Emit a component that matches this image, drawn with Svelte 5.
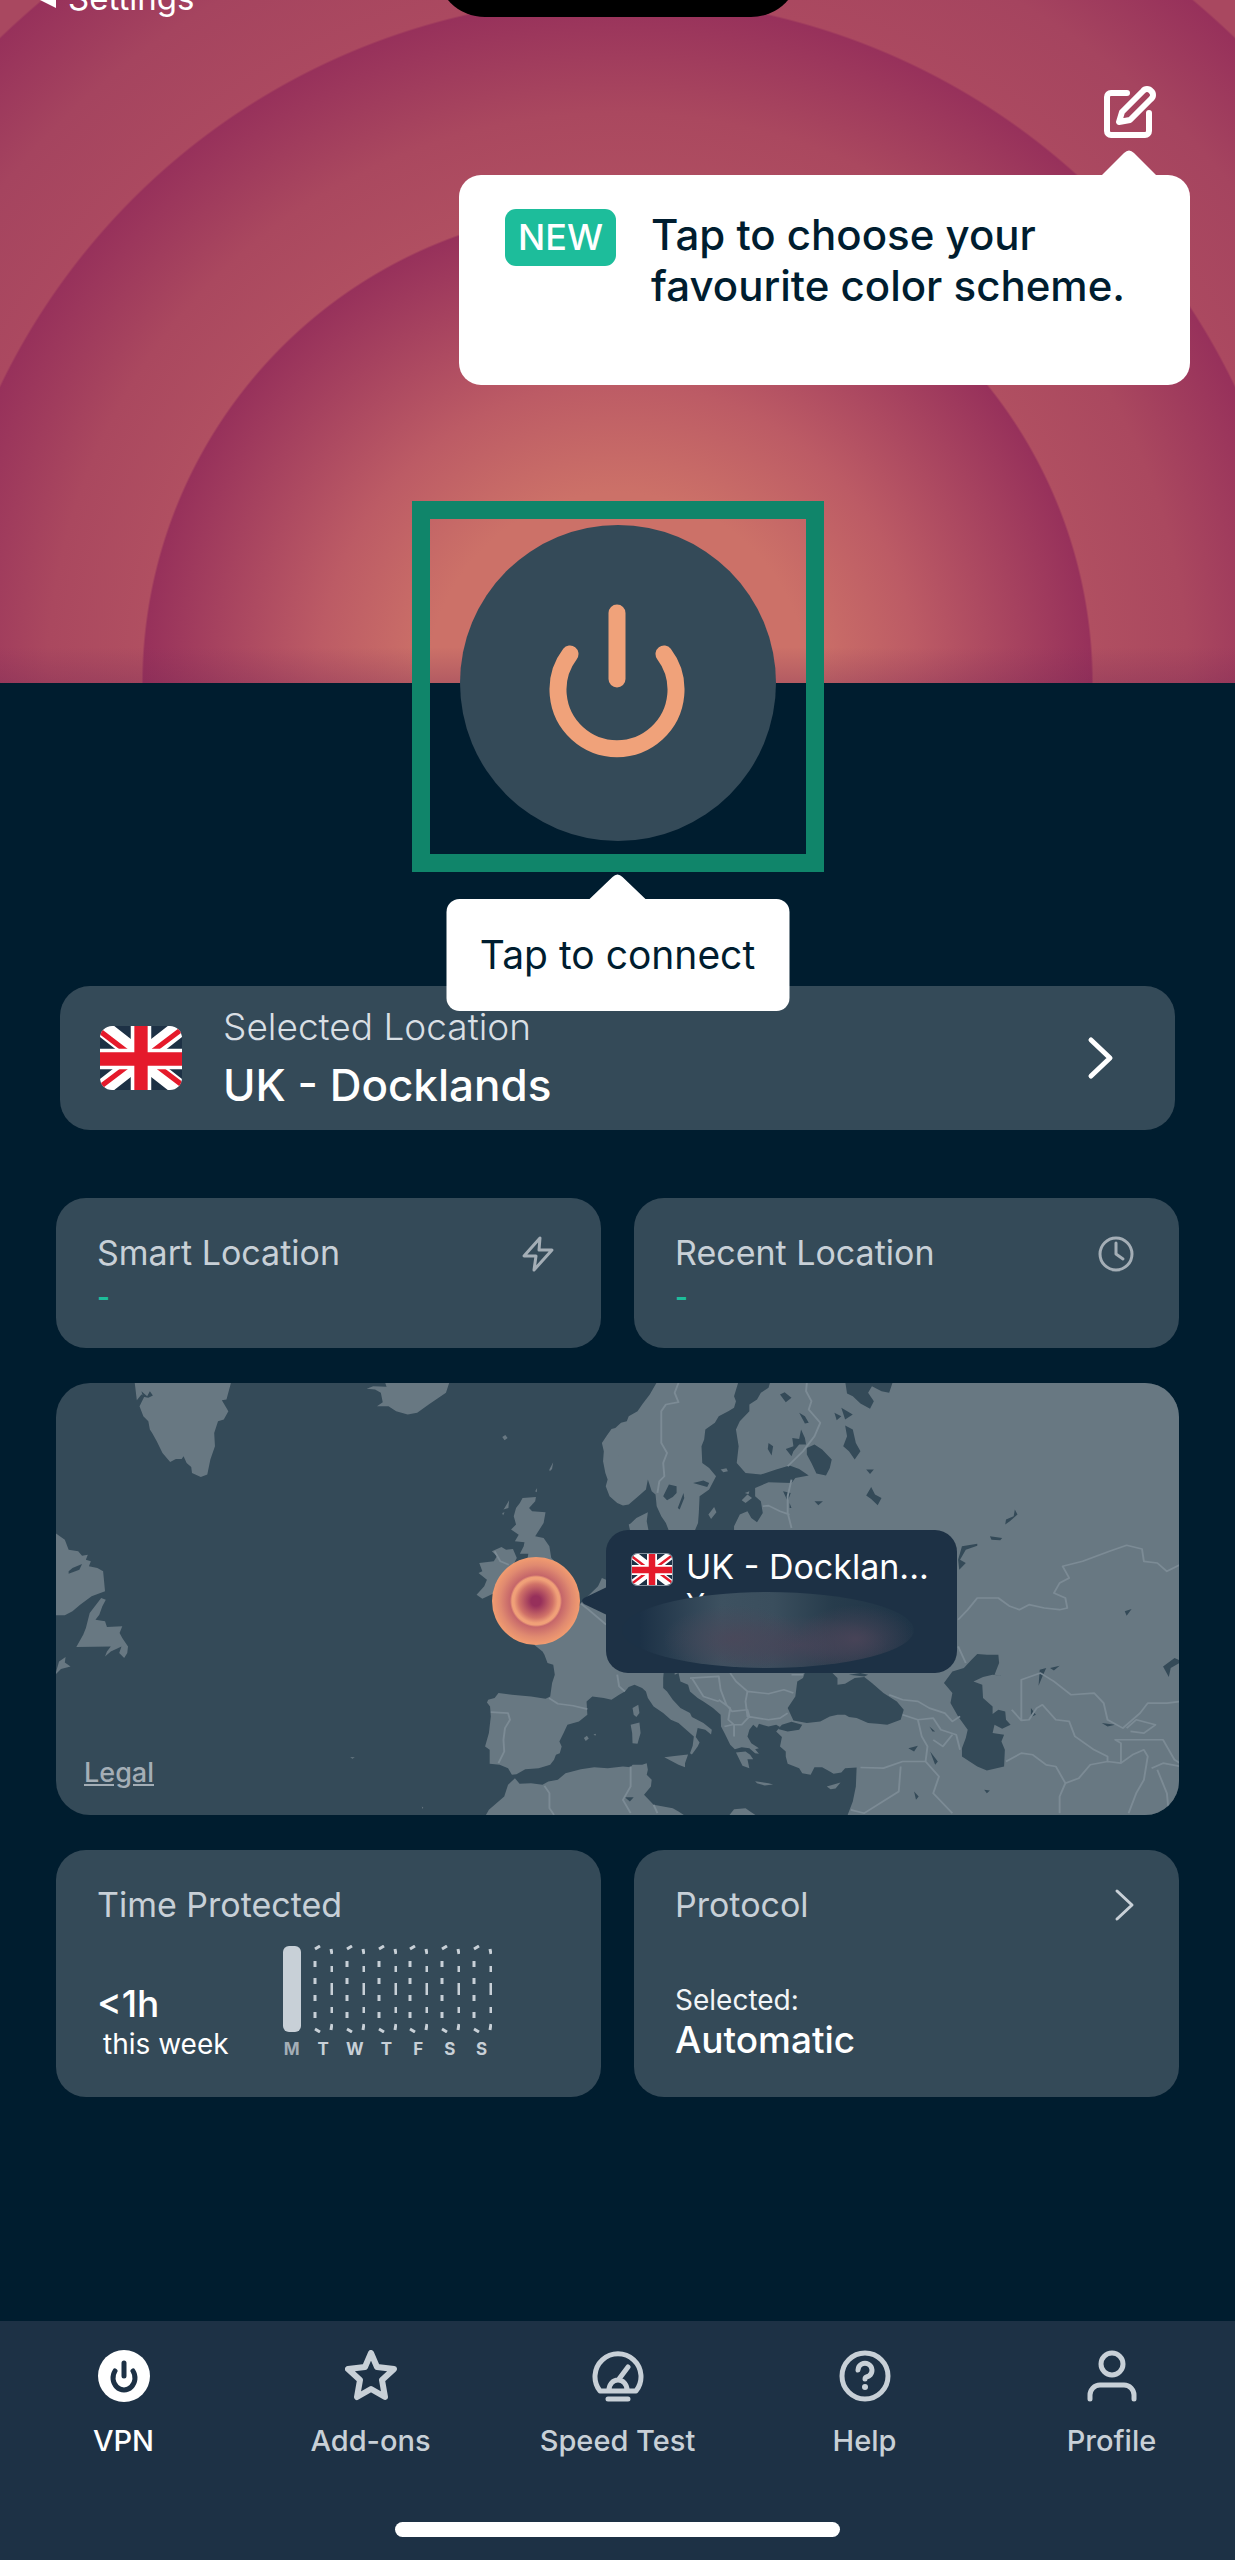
<script>
  const days = ["M", "T", "W", "T", "F", "S", "S"];
  const today = 0;

  const quickLocations = [
    { title: "Smart Location", value: "-", icon: "bolt" },
    { title: "Recent Location", value: "-", icon: "clock" },
  ];

  const tabs = [
    { id: "vpn", label: "VPN" },
    { id: "addons", label: "Add-ons" },
    { id: "speed", label: "Speed Test" },
    { id: "help", label: "Help" },
    { id: "profile", label: "Profile" },
  ];

  let activeTab = $state("vpn");
</script>

{#snippet flag()}
  <svg class="flag" viewBox="0 0 80 62" preserveAspectRatio="none" aria-hidden="true">
    <rect width="80" height="62" fill="#1d3145" />
    <path d="M0 0 80 62M80 0 0 62" stroke="#fff" stroke-width="17" />
    <path d="M0 5 29 27M80 3 52 24M0 59 28 38M80 57 52 36" stroke="#e51a2b" stroke-width="5" />
    <path d="M40 0V62M0 32H80" stroke="#fff" stroke-width="20" />
    <path d="M40 0V62M0 32H80" stroke="#e51a2b" stroke-width="13" />
  </svg>
{/snippet}

<div class="app">
  <header class="hero">
    <div class="island"></div>
    <a class="back" href="#settings">
      <svg width="20" height="22" viewBox="0 0 20 22" aria-hidden="true"><path d="M0 11 20 1V21Z" fill="#fff" /></svg>
      Settings
    </a>
    <button class="edit" aria-label="Edit color scheme">
      <svg width="56" height="56" viewBox="0 0 56 56" fill="none" stroke="#fff" stroke-width="6" stroke-linecap="round" stroke-linejoin="round">
        <path d="M25 10H9a4 4 0 0 0-4 4V48a4 4 0 0 0 4 4H43a4 4 0 0 0 4-4V30" />
        <path d="M17 39 20 29 41 8a5 5 0 0 1 8 0a5 5 0 0 1 0 8L28 37Z" />
      </svg>
    </button>
    <div class="scheme-tip">
      <svg class="arrow" width="58" height="28" viewBox="0 0 58 28" aria-hidden="true"><path d="M0 28 24 4Q29-1 34 4L58 28Z" fill="#fff" /></svg>
      <span class="badge">NEW</span>
      <p>Tap to choose your<br />favourite color scheme.</p>
    </div>
  </header>

  <main>
    <div class="power-frame">
      <button class="power" aria-label="Connect">
        <svg width="140" height="160" viewBox="0 0 140 160" fill="none" stroke="#f0a27a" stroke-width="17" stroke-linecap="round">
          <path d="M69 10V76" />
          <path d="M22 51A59 59 0 1 0 116 51" />
        </svg>
      </button>
      <div class="connect-tip">
        <svg class="arrow" width="58" height="27" viewBox="0 0 58 27" aria-hidden="true"><path d="M0 27 24 4Q29-1 34 4L58 27Z" fill="#fff" /></svg>
        Tap to connect
      </div>
    </div>

    <button class="card selected">
      {@render flag()}
      <span class="selected-text">
        <span class="caption">Selected Location</span>
        <strong>UK - Docklands</strong>
      </span>
      <svg width="34" height="48" viewBox="0 0 34 48" fill="none" stroke="#fff" stroke-width="5" stroke-linecap="round" stroke-linejoin="round" aria-hidden="true"><path d="M8 6 27 24 8 42" /></svg>
    </button>

    <section class="grid">
      {#each quickLocations as loc}
        <button class="card quick">
          <span class="card-head">
            {loc.title}
            <svg width="38" height="38" viewBox="0 0 38 38" fill="none" stroke="#a4aeb6" stroke-width="3" stroke-linecap="round" stroke-linejoin="round" aria-hidden="true">
              {#if loc.icon === "bolt"}
                <path d="M21 4 5 22H17L15 36 33 16H20Z" />
              {:else}
                <circle cx="19" cy="20" r="16" />
                <path d="M19 9V20L26 25" />
              {/if}
            </svg>
          </span>
          <span class="value">{loc.value}</span>
        </button>
      {/each}

      <div class="map">
        <svg class="world" viewBox="0 0 1122 432" preserveAspectRatio="xMidYMid slice" aria-hidden="true">
          <!-- Atlantic side -->
          <g transform="translate(-6.5 -3.3) scale(.3827 .3333)" fill="#687882">
            <path d="M222 5H475L462 60 450 62 467 95 455 120 440 125 430 160 432 200 420 240 412 285 395 292 372 280 370 262 358 250 350 230 345 238 330 238 315 247 295 220 280 185 268 160 262 150 258 125 245 110 235 80 248 50 240 45 228 62Z" />
            <path d="M240 35 255 50 262 35 270 48 258 55 244 52Z" fill="#344a58" />
            <path d="M875 5H1045L1035 40 1012 58 990 75 960 100 935 105 905 95 885 80 855 80 870 68 865 40 850 30 828 28 845 20 880 22Z" />
            <path d="M15 460 40 480 50 510 75 515 85 528 100 525 95 540 108 545 103 560 125 565 140 575 145 635 110 650 80 675 60 695 40 707 15 707Z" />
            <path d="M50 575 60 565 85 553 78 570 50 582Z" fill="#344a58" />
            <path d="M135 655 147 660 138 680 130 705 120 720 145 725 150 742 190 740 183 760 190 775 205 800 203 820 195 835 182 820 188 800 160 815 145 830 150 815 160 800 70 802 88 765 95 745 105 700Z" />
            <path d="M15 885 25 845 42 832 40 848 55 860 30 868Z" />
            <path d="M1182 172 1190 166 1196 175 1188 182ZM1305 270 1315 248 1312 268 1306 275ZM1268 335 1273 325 1272 338ZM1188 385 1200 362 1198 385 1185 390ZM1182 400 1188 398 1184 408Z" />
            <path d="M1235 355 1270 352 1268 365 1252 385 1260 395 1295 398 1290 430 1268 470 1290 475 1305 500 1310 535 1340 570V640H1240V600L1250 522 1228 522 1238 500 1240 488 1215 485 1225 465 1205 450 1218 435 1212 410 1218 385 1228 370Z" />
            <path d="M1155 515 1180 502 1192 510 1210 508 1220 535 1200 580 1180 630 1130 657 1115 645 1135 620 1142 600 1120 580 1130 575 1122 550 1160 545 1168 530Z" />
            <path d="M1395 1075 1403 1068 1408 1076 1400 1084ZM1420 1064 1427 1062 1425 1068ZM785 1132 797 1132 791 1137ZM972 1280 976 1284 973 1287Z" />
          </g>

          <!-- Europe and Asia -->
          <g transform="translate(543.5 -3.3) scale(.3827 .3333)" fill="#687882">
            <path d="M150 5 130 45 112 72 98 95 75 110 70 125 55 130 40 145 30 148 18 168 5 190 10 215 8 245 14 280 20 300 15 320 25 350 45 370 60 378 75 375 100 350 120 330 125 300 135 335 145 345 148 380 160 410 172 430 182 460V600H16L5 595-5 620-50 670-90 760-172 795-150 815-145 825-137 850-122 855-118 885-125 910-130 950-142 957-180 950-230 945-265 940-275 955-292 960-295 968-287 980-285 1010-290 1060-300 1100-288 1110-288 1152-262 1155-240 1165-230 1185-218 1183-195 1168-160 1165-130 1155-120 1140-115 1125-105 1120-100 1100-106 1085-95 1060-85 1035-55 1025-33 1005-35 965-20 950 10 955 30 960 50 945 65 935 75 922 90 915 110 925 120 935 125 955 140 980 165 1000 185 1020 205 1030 225 1050 245 1070 242 1098 235 1120 240 1124 255 1100 260 1088 250 1072 255 1045 275 1050 290 1064 292 1050 270 1030 240 1012 235 1000 210 985 190 960 175 935 165 925 165 895 168 860H195V885L205 880 210 905 230 915 235 935 255 955 270 965 295 985 315 1005 316 1040 325 1060 340 1095 352 1108 370 1102 390 1105 405 1120 415 1122 405 1108 415 1105 395 1090 385 1070 390 1050 400 1035 410 1045 415 1032 440 1040 460 1035 470 1042 460 1055 475 1072 470 1100 485 1115 485 1130 490 1152 520 1165 528 1180 550 1185 560 1162 580 1162 600 1175 610 1182 630 1178 640 1165 670 1163 668 1220 660 1265 645 1310H1525V5Z" />
            <path d="M-300 1310-290 1290-250 1250-240 1215-222 1195-210 1212-180 1210-150 1215-135 1205-110 1200-90 1180-50 1168-15 1162 20 1165 60 1160 80 1162 85 1155 110 1155 122 1150 125 1170 122 1185 135 1200 133 1220 115 1245 140 1275 190 1285 205 1295 225 1310Z" />
            <path d="M335 1310 350 1288 380 1285 392 1295 412 1310ZM80 432 95 415 125 398 122 425 128 460H80L75 435ZM85 985 100 975 103 1000 95 1012 88 1005ZM80 1035 103 1028 106 1060 98 1092 85 1090 84 1060ZM168 1132 200 1128 230 1124 222 1150 222 1162 205 1155ZM405 1204 440 1210 452 1214 430 1217 410 1210ZM592 1220 628 1208 615 1226 602 1228ZM355 1118 380 1115 392 1125 400 1138 385 1138 390 1165 372 1158Z" />

            <g fill="#344a58">
              <path d="M362 5H445L440 25 420 40 410 60 390 75 390 95 365 125 355 150 362 200 357 250 380 280 420 285 460 270 495 258 520 268 545 288 510 295 500 310 440 308 405 325 405 350 420 365 425 400 410 428 395 415 385 395 365 405 350 440V460H245L256 430 258 400 260 350 285 330 303 290 285 265 267 250 265 200 272 180 275 150 300 130 310 110 335 95 350 85 355 65 350 50Z" />
              <path d="M640 5H765L755 40 735 35 710 20 700 40 715 65 705 88 680 72 660 50 645 42ZM540 205 560 195 580 210 605 240 600 265 590 288 565 282 552 250 540 225ZM640 138 660 150 668 190 680 215 665 240 650 215 635 200 645 170ZM470 45 482 38 500 55 485 68ZM520 100 535 110 545 130 535 132ZM630 85 660 105 640 120ZM612 100 630 110 618 122ZM525 150 535 175 538 195 520 195 505 215 500 230 485 208 505 200 502 175 520 178ZM440 190 452 200 448 228 438 208ZM695 270 715 270 705 283ZM708 322 718 345 735 355 725 377 708 358 695 348ZM560 365 582 365 570 377ZM165 350 180 315 200 320 200 340 190 352 175 362ZM203 385 218 340 220 355 208 390ZM243 310 270 303 285 310 280 322ZM478 335 498 340 490 365ZM495 370 500 385 495 385Z" />
              <path d="M540 860H590L620 895 620 915 640 912 665 895 690 892 710 910 740 940 775 965 793 990 785 1020 750 1035 725 1032 700 1030 670 1015 650 1012 640 1005 620 1005 600 1010 575 1025 540 1030 505 1022 490 985 510 950 515 905 530 895ZM650 885 680 880 700 885 690 890ZM475 1035 500 1026 528 1035 520 1050 490 1055 465 1048Z" />
              <path d="M898 910 920 875 950 865 970 840 985 823 1010 825 1040 825 1042 850 1030 885 1050 888 1025 885 1000 892 975 905 998 915 1000 955 1025 980 1025 1003 1040 990 1058 995 1060 1020 1072 1035 1050 1047 1030 1035 1025 1060 1055 1065 1048 1085 1057 1110 1055 1160 1010 1172 985 1160 945 1130 945 1105 955 1075 960 1050 935 1010 915 970 920 940Z" />
              <path d="M938 570 935 540 945 500 985 492 985 498 955 510 940 540 955 550ZM1018 470 1050 475 1045 482 1022 480ZM1058 435 1060 420 1080 410 1083 390 1090 405 1070 425ZM1145 918 1148 870 1165 865 1155 890ZM1175 865 1200 858 1185 872ZM1370 695 1388 688 1375 708ZM1470 860 1500 835 1520 845 1490 865 1485 892ZM1310 1030 1345 1035 1325 1040ZM1125 985 1138 1005 1125 1012ZM805 1105 830 1098 820 1115ZM862 1115 882 1145 875 1155ZM860 1040 875 1055 868 1055ZM820 1235 832 1250 825 1260ZM1003 1230 1018 1232 1010 1240ZM65 1252 88 1252 78 1265Z" />
            </g>
            <path d="M283 405 298 382 304 398 290 418ZM370 362 385 345 397 355 380 370ZM378 340 390 335 388 344ZM315 270 330 266 334 275 322 278ZM25 228 48 228 48 232 25 232Z" />
            <path
              class="borders"
              d="M205 10 195 40 205 68 172 75 160 95 160 190 175 220 165 250 168 290 155 305 150 340M540 10 538 35 552 65 545 90 575 130 560 170 530 215 490 260M500 300 490 350 490 400 500 445M425 380 440 378 470 395 495 405M935 720 960 690 985 655 1015 655 1040 655 1070 680 1095 690 1120 675 1160 685 1200 690 1220 685 1215 655 1185 640 1200 610 1225 595 1208 560 1260 545 1330 515 1375 497 1415 508 1420 545 1455 550 1480 575 1515 555M1100 1020V900L1150 880 1185 905 1230 945 1290 940 1315 970 1325 1020 1365 1045 1410 1000 1430 970 1480 970 1515 965M1075 990 1100 1022 1120 1020 1140 985 1155 975 1190 1020 1225 1025 1240 1070 1290 1110 1325 1130 1325 1145 1280 1155 1250 1195 1215 1210 1190 1160 1165 1155 1130 1125 1100 1120 1060 1145M1215 1210 1200 1250V1300M1325 1145 1360 1150 1360 1090 1345 1080 1440 1080 1470 1080 1500 1140 1515 1150M1375 1045 1400 1020 1450 1035 1420 1060 1385 1055M1380 1300 1400 1240 1420 1200 1430 1130 1420 1110 1390 1125 1360 1150M755 945 790 960 830 965 860 985 900 1000 920 1025 940 1010M790 1005 830 1020 870 1015 890 1050 930 1065 940 1110M830 1020 840 1070 855 1100 850 1145 790 1145 740 1165 680 1163M850 1145 885 1190 870 1240 920 1300M785 1160 780 1235 690 1300 655 1290M870 1080 895 1100 920 1065M385 935 440 942 480 930 505 940M340 880 355 905 385 935 380 965 385 1010 440 1020 470 1015 490 1000M235 895 310 890 315 930 330 975 345 995 385 990 390 1010 370 1035 345 1035 325 1040M310 960 340 985 335 1020 350 1035 350 1070M240 895 270 950 310 965M500 885 530 885M935 800 955 850M1440 1165 1470 1150 1515 1160M1455 1170 1480 1240 1485 1300M45 885 50 920 65 935M80 1160V1220L60 1260 80 1300M140 1275 150 1300M-133 955-110 972-70 978-33 988M-285 997-240 1000-235 1020-248 1045-252 1080-250 1115-265 1150M-145 1218-132 1240-132 1285-120 1305M-50 672-30 690 16 735M-275 515-260 545-238 555"
            />
          </g>
        </svg>

        <div class="pin"></div>

        <div class="map-tip">
          <svg class="pointer" width="25" height="28" viewBox="0 0 25 28" aria-hidden="true"><path d="M25 0V28L2 17Q-2 14 2 11Z" fill="#1d3145" /></svg>
          {@render flag()}
          <div class="map-tip-text">
            <span>UK - Docklan...</span>
            <small>Y</small>
          </div>
          <div class="smudge"></div>
        </div>

        <a class="legal" href="#legal">Legal</a>
      </div>

      <div class="card stat">
        <span class="card-head">Time Protected</span>
        <div class="usage">
          <div class="total">
            <strong>&lt;1h</strong>
            <span>this week</span>
          </div>
          <div class="week">
            {#each days as day, i}
              <div class="day" class:today={i === today}>
                <svg width="20" height="88" viewBox="0 0 20 88" aria-hidden="true">
                  {#if i === today}
                    <rect x="1" y="1" width="18" height="86" rx="6" fill="#c8d0d7" />
                  {:else}
                    <path
                      d="M2 4 7 1M2 16V22M2 33V39M2 50V56M2 67V73M2 84 7 87M18 4 19 9M19 21V27M19 38V50M19 62V68M19 79 18 85"
                      stroke="#c8d0d7"
                      stroke-width="3"
                    />
                  {/if}
                </svg>
                <span>{day}</span>
              </div>
            {/each}
          </div>
        </div>
      </div>

      <button class="card stat">
        <span class="card-head">
          Protocol
          <svg width="28" height="38" viewBox="0 0 28 38" fill="none" stroke="#c8d0d7" stroke-width="3" stroke-linecap="round" stroke-linejoin="round" aria-hidden="true"><path d="M10 5 25 19 10 33" /></svg>
        </span>
        <span class="protocol">
          <span>Selected:</span>
          <strong>Automatic</strong>
        </span>
      </button>
    </section>
  </main>

  <nav>
    <div class="tabs">
      {#each tabs as tab}
        <button class="tab" class:active={activeTab === tab.id} onclick={() => (activeTab = tab.id)}>
          <svg width="52" height="52" viewBox="0 0 52 52" fill="none" stroke="currentColor" stroke-width="5" stroke-linecap="round" stroke-linejoin="round" aria-hidden="true">
            {#if tab.id === "vpn"}
              <circle cx="26" cy="26" r="26" fill="currentColor" stroke="none" />
              <path d="M26 13V26M17 21A11 12 0 1 0 35 21" stroke="#1d3145" />
            {:else if tab.id === "addons"}
              <path d="M26 3 32 17 49 19 37 30 40 47 26 39 12 47 15 30 3 19 20 17Z" stroke-width="6" />
            {:else if tab.id === "speed"}
              <path d="M8 41A23 23 0 1 1 44 41ZM16 49H36M17 40A9 10 0 0 1 35 40M27 29 36 17" />
            {:else if tab.id === "help"}
              <circle cx="26" cy="26" r="23" />
              <path d="M19 20A7 7 0 1 1 30 26Q26 27 26 29" />
              <circle cx="26" cy="37" r="3" fill="currentColor" stroke="none" />
            {:else}
              <circle cx="26" cy="14" r="11" />
              <path d="M4 49V45A10 10 0 0 1 14 35H38A10 10 0 0 1 48 45V49" />
            {/if}
          </svg>
          {tab.label}
        </button>
      {/each}
    </div>
    <div class="home-bar"></div>
  </nav>
</div>

<style>
  :global(body) {
    margin: 0;
    background: #001d2f;
  }

  .app {
    display: flex;
    flex-direction: column;
    min-height: 100vh;
    color: #fff;
    background: #001d2f;
    font-family: Inter, "Liberation Sans", sans-serif;
  }

  button {
    padding: 0;
    border: 0;
    background: none;
    color: inherit;
    font: inherit;
    text-align: left;
    cursor: pointer;
  }

  svg {
    display: block;
    flex: none;
  }

  strong {
    font-weight: 500;
  }

  /* header with the colored rings */
  .hero {
    position: relative;
    display: flex;
    flex-direction: column;
    align-items: flex-end;
    box-sizing: border-box;
    height: 683px;
    padding: 83px 45px 0;
    overflow: hidden;
    background:
      linear-gradient(transparent calc(100% - 36px), rgba(120, 40, 85, 0.3)),
      radial-gradient(
        circle at 50% 100%,
        #cc7168 0,
        #cc7168 190px,
        #bc5b65 300px,
        #97315b 474px,
        #b04f61 476px,
        #aa485f 570px,
        #97315b 684px,
        #ab4960 686px,
        #a5445f 790px,
        #97315b 892px,
        #a94860 894px
      );
  }

  .island {
    position: absolute;
    top: -81px;
    left: 50%;
    width: 364px;
    height: 98px;
    margin-left: -182px;
    border-radius: 49px;
    background: #000;
  }

  .back {
    position: absolute;
    top: -21px;
    left: 36px;
    display: flex;
    align-items: center;
    gap: 12px;
    color: #fff;
    font-size: 33px;
    line-height: 38px;
    text-decoration: none;
  }

  .edit {
    margin-right: 32px;
  }

  .scheme-tip {
    position: relative;
    display: flex;
    align-items: flex-start;
    box-sizing: border-box;
    gap: 35px;
    width: 731px;
    height: 210px;
    margin-top: 36px;
    padding: 34px 46px;
    border-radius: 22px;
    background: #fff;
    color: #001d2f;
  }

  .scheme-tip .arrow {
    position: absolute;
    top: -26px;
    right: 32px;
  }

  .badge {
    padding: 0 13px;
    border-radius: 11px;
    background: #1dbd9b;
    color: #fff;
    font-size: 36px;
    font-weight: 500;
    line-height: 57px;
  }

  .scheme-tip p {
    margin: 0;
    font-size: 42px;
    font-weight: 500;
    line-height: 51px;
    white-space: nowrap;
  }

  main {
    display: flex;
    flex-direction: column;
    padding: 0 56px;
  }

  .power-frame {
    position: relative;
    z-index: 1;
    align-self: center;
    box-sizing: border-box;
    width: 412px;
    height: 371px;
    margin-top: -182px;
    padding-top: 6px;
    border: 18px solid #10856a;
  }

  .power {
    display: grid;
    place-items: center;
    width: 316px;
    height: 316px;
    margin: 0 auto;
    border-radius: 50%;
    background: #344a58;
  }

  .connect-tip {
    position: absolute;
    top: 380px;
    left: 50%;
    width: 343px;
    border-radius: 13px;
    background: #fff;
    color: #001d2f;
    font-size: 39px;
    line-height: 112px;
    text-align: center;
    white-space: nowrap;
    transform: translateX(-50%);
  }

  .connect-tip .arrow {
    position: absolute;
    top: -26px;
    left: 50%;
    margin-left: -29px;
  }

  .card {
    border-radius: 30px;
    background: #344a58;
  }

  .selected {
    display: flex;
    align-items: center;
    height: 144px;
    margin: 114px 4px 0;
    padding: 0 58px 0 40px;
  }

  .selected .flag {
    width: 82px;
    height: 64px;
    border-radius: 12px;
  }

  .selected-text {
    display: flex;
    flex: 1;
    flex-direction: column;
    padding: 0 0 4px 41px;
    color: #fff;
    font-size: 44px;
    line-height: 58px;
  }

  .caption {
    color: #d9dfe4;
    font-size: 37px;
    font-weight: 300;
  }

  .grid {
    display: grid;
    grid-template-columns: 1fr 1fr;
    gap: 35px 33px;
    margin-top: 68px;
  }

  .quick,
  .stat {
    display: flex;
    flex-direction: column;
    box-sizing: border-box;
    padding: 35px 44px 35px 41px;
  }

  .quick {
    height: 150px;
  }

  .card-head {
    display: flex;
    align-items: center;
    justify-content: space-between;
    color: #c8d0d7;
    font-size: 34px;
    line-height: 40px;
  }

  .value {
    color: #1dbd9b;
    font-size: 28px;
    font-weight: 600;
    line-height: 48px;
  }

  .map {
    position: relative;
    grid-column: 1 / -1;
    height: 432px;
    overflow: hidden;
    border-radius: 34px;
    background: #344a58;
  }

  .world {
    width: 100%;
    height: 100%;
  }

  .borders {
    fill: none;
    stroke: #7c8b95;
    stroke-width: 5;
    stroke-linejoin: round;
  }

  .pin {
    position: absolute;
    top: 174px;
    left: 436px;
    width: 88px;
    height: 88px;
    border-radius: 50%;
    background: radial-gradient(circle, #97305b 0 5px, #d07268 17px, #f0a078 22px 24px, #c5666a 26px, #e08a70 36px, #f29c70 44px);
  }

  .map-tip {
    position: absolute;
    top: 147px;
    left: 550px;
    display: flex;
    align-items: flex-start;
    box-sizing: border-box;
    width: 351px;
    height: 143px;
    padding: 20px 26px;
    border-radius: 22px;
    background: #1d3145;
  }

  .map-tip .flag {
    width: 40px;
    height: 31px;
    margin-top: 4px;
    border-radius: 5px;
    outline: 1px solid #8693a0;
  }

  .pointer {
    position: absolute;
    top: 57px;
    left: -24px;
  }

  .map-tip-text {
    display: flex;
    flex-direction: column;
    padding-left: 14px;
    font-size: 34px;
    line-height: 34px;
    white-space: nowrap;
  }

  .map-tip-text small {
    font-size: 28px;
    line-height: 40px;
  }

  .smudge {
    position: absolute;
    top: 62px;
    left: 16px;
    width: 292px;
    height: 76px;
    overflow: hidden;
    border-radius: 50%;
    background:
      radial-gradient(ellipse 70px 34px at 38% 62%, rgba(74, 72, 90, 0.9), transparent),
      radial-gradient(ellipse 60px 34px at 80% 62%, rgba(74, 68, 88, 0.9), transparent),
      radial-gradient(ellipse 90px 30px at 60% 70%, rgba(70, 68, 88, 0.9), transparent),
      linear-gradient(90deg, #1c3146 6%, #3d5160 34%, #3a4e5d 52%, #273c4c 72%, #1f3447);
  }

  .legal {
    position: absolute;
    bottom: 26px;
    left: 28px;
    color: #a4aeb6;
    font-size: 27px;
    font-weight: 500;
    line-height: 32px;
  }

  .stat {
    height: 247px;
  }

  .usage {
    display: flex;
    gap: 53px;
    margin-top: 20px;
  }

  .total {
    display: flex;
    flex-direction: column;
    align-items: flex-end;
    padding-top: 37px;
    font-size: 28px;
    line-height: 36px;
  }

  .total strong {
    align-self: flex-start;
    font-size: 37px;
    line-height: 44px;
  }

  .total span {
    padding-left: 6px;
  }

  .week {
    display: flex;
    justify-content: space-between;
    width: 210px;
  }

  .day {
    display: flex;
    flex-direction: column;
    align-items: center;
    width: 20px;
    color: #c8d0d7;
    font-size: 17px;
    font-weight: 700;
    line-height: 32px;
  }

  .today {
    color: #a4aeb6;
  }

  .protocol {
    display: flex;
    flex-direction: column;
    margin-top: 56px;
    color: #f2f5f7;
    font-size: 28px;
    line-height: 38px;
  }

  .protocol strong {
    color: #fff;
    font-size: 37px;
    line-height: 42px;
  }

  nav {
    display: flex;
    flex-direction: column;
    align-items: center;
    justify-content: space-between;
    box-sizing: border-box;
    height: 239px;
    margin-top: auto;
    padding: 29px 0 23px;
    background: #1d3145;
  }

  .tabs {
    display: grid;
    grid-template-columns: repeat(5, 1fr);
    width: 100%;
  }

  .tab {
    display: flex;
    flex-direction: column;
    align-items: center;
    gap: 21px;
    color: #c8d0d7;
    font-size: 29px;
    font-weight: 500;
    line-height: 36px;
  }

  .active {
    color: #fff;
  }

  .home-bar {
    width: 36%;
    height: 15px;
    border-radius: 8px;
    background: #fff;
  }
</style>
